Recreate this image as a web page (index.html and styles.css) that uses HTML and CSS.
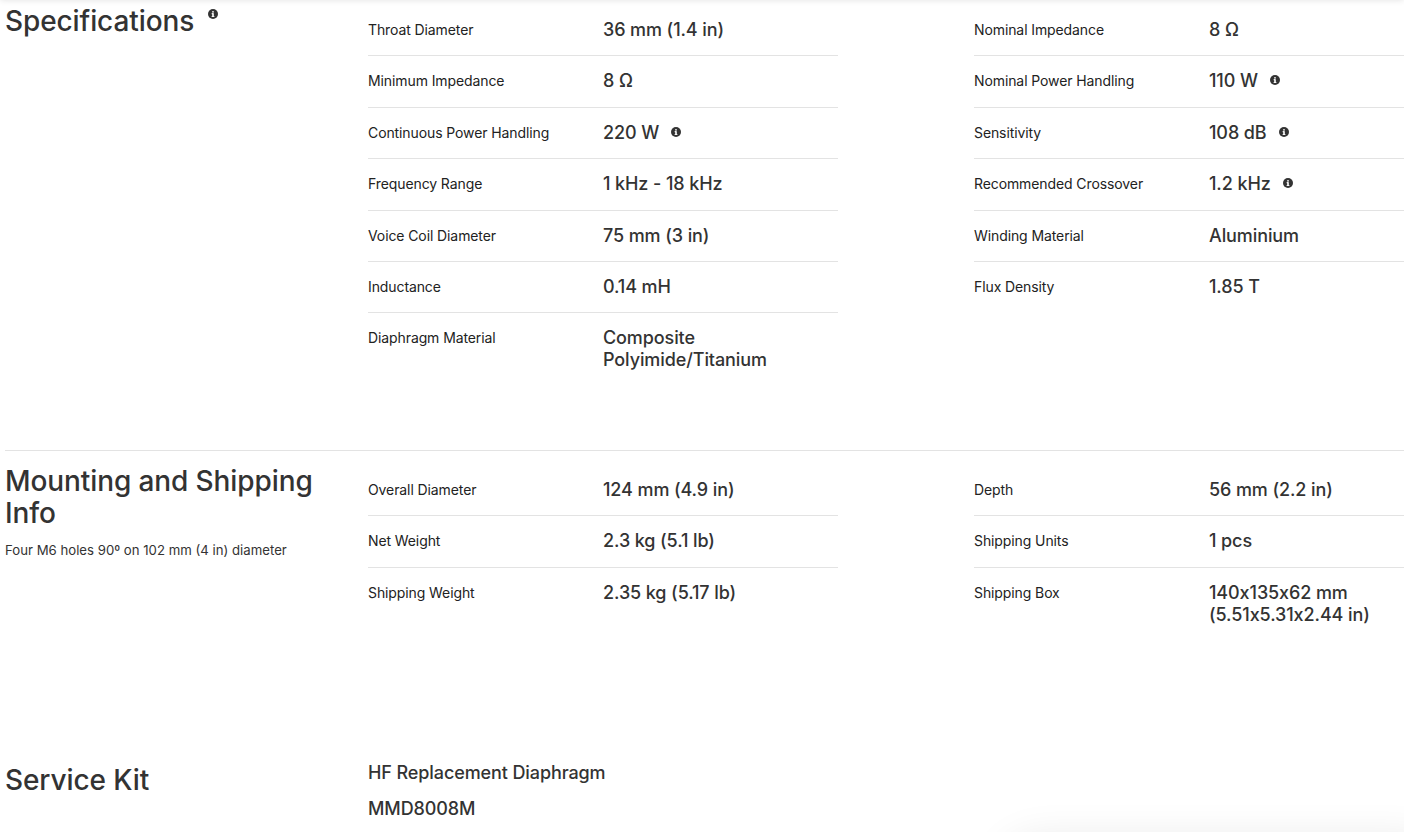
FILE: index.html
```html
<!DOCTYPE html>
<html lang="en">
<head>
<meta charset="utf-8">
<title>Specifications</title>
<link rel="stylesheet" href="styles.css">
</head>
<body>
<div class="top-shadow"></div>
<main class="page">
  <section class="section">
    <div class="heading-col">
      <h2 class="heading">Specifications<svg class="info info-head" viewBox="0 0 10 10"><circle cx="5" cy="5" r="5"/><rect x="4.2" y="4.2" width="1.6" height="3.6" fill="#fff"/><rect x="3.6" y="4.2" width="1.4" height="1" fill="#fff"/><rect x="3.6" y="7" width="2.8" height="0.9" fill="#fff"/><circle cx="5" cy="2.8" r="0.9" fill="#fff"/></svg></h2>
    </div>
    <div class="tables">
      <div class="table">
        <div class="row"><div class="label">Throat Diameter</div><div class="value">36 mm (1.4 in)</div></div>
        <div class="row"><div class="label">Minimum Impedance</div><div class="value">8 Ω</div></div>
        <div class="row"><div class="label">Continuous Power Handling</div><div class="value">220 W<svg class="info" viewBox="0 0 10 10"><circle cx="5" cy="5" r="5"/><rect x="4.2" y="4.2" width="1.6" height="3.6" fill="#fff"/><rect x="3.6" y="4.2" width="1.4" height="1" fill="#fff"/><rect x="3.6" y="7" width="2.8" height="0.9" fill="#fff"/><circle cx="5" cy="2.8" r="0.9" fill="#fff"/></svg></div></div>
        <div class="row"><div class="label">Frequency Range</div><div class="value">1 kHz - 18 kHz</div></div>
        <div class="row"><div class="label">Voice Coil Diameter</div><div class="value">75 mm (3 in)</div></div>
        <div class="row"><div class="label">Inductance</div><div class="value">0.14 mH</div></div>
        <div class="row"><div class="label">Diaphragm Material</div><div class="value">Composite<br>Polyimide/Titanium</div></div>
      </div>
      <div class="table">
        <div class="row"><div class="label">Nominal Impedance</div><div class="value">8 Ω</div></div>
        <div class="row"><div class="label">Nominal Power Handling</div><div class="value">110 W<svg class="info" viewBox="0 0 10 10"><circle cx="5" cy="5" r="5"/><rect x="4.2" y="4.2" width="1.6" height="3.6" fill="#fff"/><rect x="3.6" y="4.2" width="1.4" height="1" fill="#fff"/><rect x="3.6" y="7" width="2.8" height="0.9" fill="#fff"/><circle cx="5" cy="2.8" r="0.9" fill="#fff"/></svg></div></div>
        <div class="row"><div class="label">Sensitivity</div><div class="value">108 dB<svg class="info" viewBox="0 0 10 10"><circle cx="5" cy="5" r="5"/><rect x="4.2" y="4.2" width="1.6" height="3.6" fill="#fff"/><rect x="3.6" y="4.2" width="1.4" height="1" fill="#fff"/><rect x="3.6" y="7" width="2.8" height="0.9" fill="#fff"/><circle cx="5" cy="2.8" r="0.9" fill="#fff"/></svg></div></div>
        <div class="row"><div class="label">Recommended Crossover</div><div class="value">1.2 kHz<svg class="info" viewBox="0 0 10 10"><circle cx="5" cy="5" r="5"/><rect x="4.2" y="4.2" width="1.6" height="3.6" fill="#fff"/><rect x="3.6" y="4.2" width="1.4" height="1" fill="#fff"/><rect x="3.6" y="7" width="2.8" height="0.9" fill="#fff"/><circle cx="5" cy="2.8" r="0.9" fill="#fff"/></svg></div></div>
        <div class="row"><div class="label">Winding Material</div><div class="value">Aluminium</div></div>
        <div class="row"><div class="label">Flux Density</div><div class="value">1.85 T</div></div>
      </div>
    </div>
  </section>

  <section class="section bordered">
    <div class="heading-col">
      <h2 class="heading">Mounting and Shipping Info</h2>
      <p class="note">Four M6 holes 90º on 102 mm (4 in) diameter</p>
    </div>
    <div class="tables">
      <div class="table">
        <div class="row"><div class="label">Overall Diameter</div><div class="value">124 mm (4.9 in)</div></div>
        <div class="row"><div class="label">Net Weight</div><div class="value">2.3 kg (5.1 lb)</div></div>
        <div class="row"><div class="label">Shipping Weight</div><div class="value">2.35 kg (5.17 lb)</div></div>
      </div>
      <div class="table">
        <div class="row"><div class="label">Depth</div><div class="value">56 mm (2.2 in)</div></div>
        <div class="row"><div class="label">Shipping Units</div><div class="value">1 pcs</div></div>
        <div class="row"><div class="label">Shipping Box</div><div class="value">140x135x62 mm<br>(5.51x5.31x2.44 in)</div></div>
      </div>
    </div>
  </section>

  <section class="section service">
    <div class="heading-col">
      <h2 class="heading heading-service">Service Kit</h2>
    </div>
    <div class="kit">
      <div class="kit-item">HF Replacement Diaphragm</div>
      <div class="kit-item">MMD8008M</div>
    </div>
  </section>
</main>
<div class="float-shadow"></div>
</body>
</html>
```

FILE: styles.css
```css
html, body {
  margin: 0;
  padding: 0;
  background: #fff;
  overflow: hidden;
}

body {
  font-family: Inter, "Noto Sans", "Liberation Sans", sans-serif;
  color: #333;
}

.top-shadow {
  position: fixed;
  top: -20px;
  left: 0;
  right: 0;
  height: 20px;
  box-shadow: 0 0 6px rgba(0, 0, 0, 0.12);
  background: #fff;
  z-index: 5;
}

.float-shadow {
  position: fixed;
  left: 1000px;
  right: -40px;
  top: 838px;
  height: 200px;
  border-radius: 40px;
  background: #fff;
  box-shadow: 0 0 40px rgba(0, 0, 0, 0.09);
  z-index: 5;
}

.page {
  margin-top: -9px;
  padding-left: 5px;
}

.section {
  display: grid;
  grid-template-columns: 363px 1fr;
  padding: 14px 0 64px;
}

.section.bordered {
  border-top: 1px solid #e3e3e3;
}

.heading-col {
  padding-right: 40px;
}

.heading {
  margin: 0;
  font-size: 28px;
  line-height: 32px;
  font-weight: 500;
  color: #333;
  letter-spacing: -0.1px;
}

.info {
  display: inline-block;
  width: 10px;
  height: 10px;
  fill: #333;
  margin-left: 12px;
  vertical-align: 2px;
}

.info-head {
  vertical-align: 12px;
  margin-left: 14px;
}

.note {
  margin: 11px 0 0;
  font-size: 13.2px;
  line-height: 20px;
  color: #333;
}

.tables {
  display: grid;
  grid-template-columns: 470px 1fr;
  column-gap: 136px;
}

.row {
  display: grid;
  grid-template-columns: 235px 1fr;
  padding: 14px 0 14.4px;
  border-bottom: 1px solid #e3e3e3;
  align-items: start;
}

.row:last-child {
  border-bottom: none;
}

.label {
  font-size: 14px;
  line-height: 22px;
  color: #222;
  letter-spacing: -0.1px;
}

.value {
  font-size: 18px;
  line-height: 22px;
  font-weight: 500;
  color: #333;
  letter-spacing: -0.1px;
}

.service {
  padding-top: 58px;
}

.heading-service {
  margin-top: 2px;
}

.kit {
  display: flex;
  flex-direction: column;
  gap: 14px;
}

.kit-item {
  font-size: 18px;
  line-height: 22px;
  font-weight: 500;
  color: #333;
  letter-spacing: -0.1px;
}
```
